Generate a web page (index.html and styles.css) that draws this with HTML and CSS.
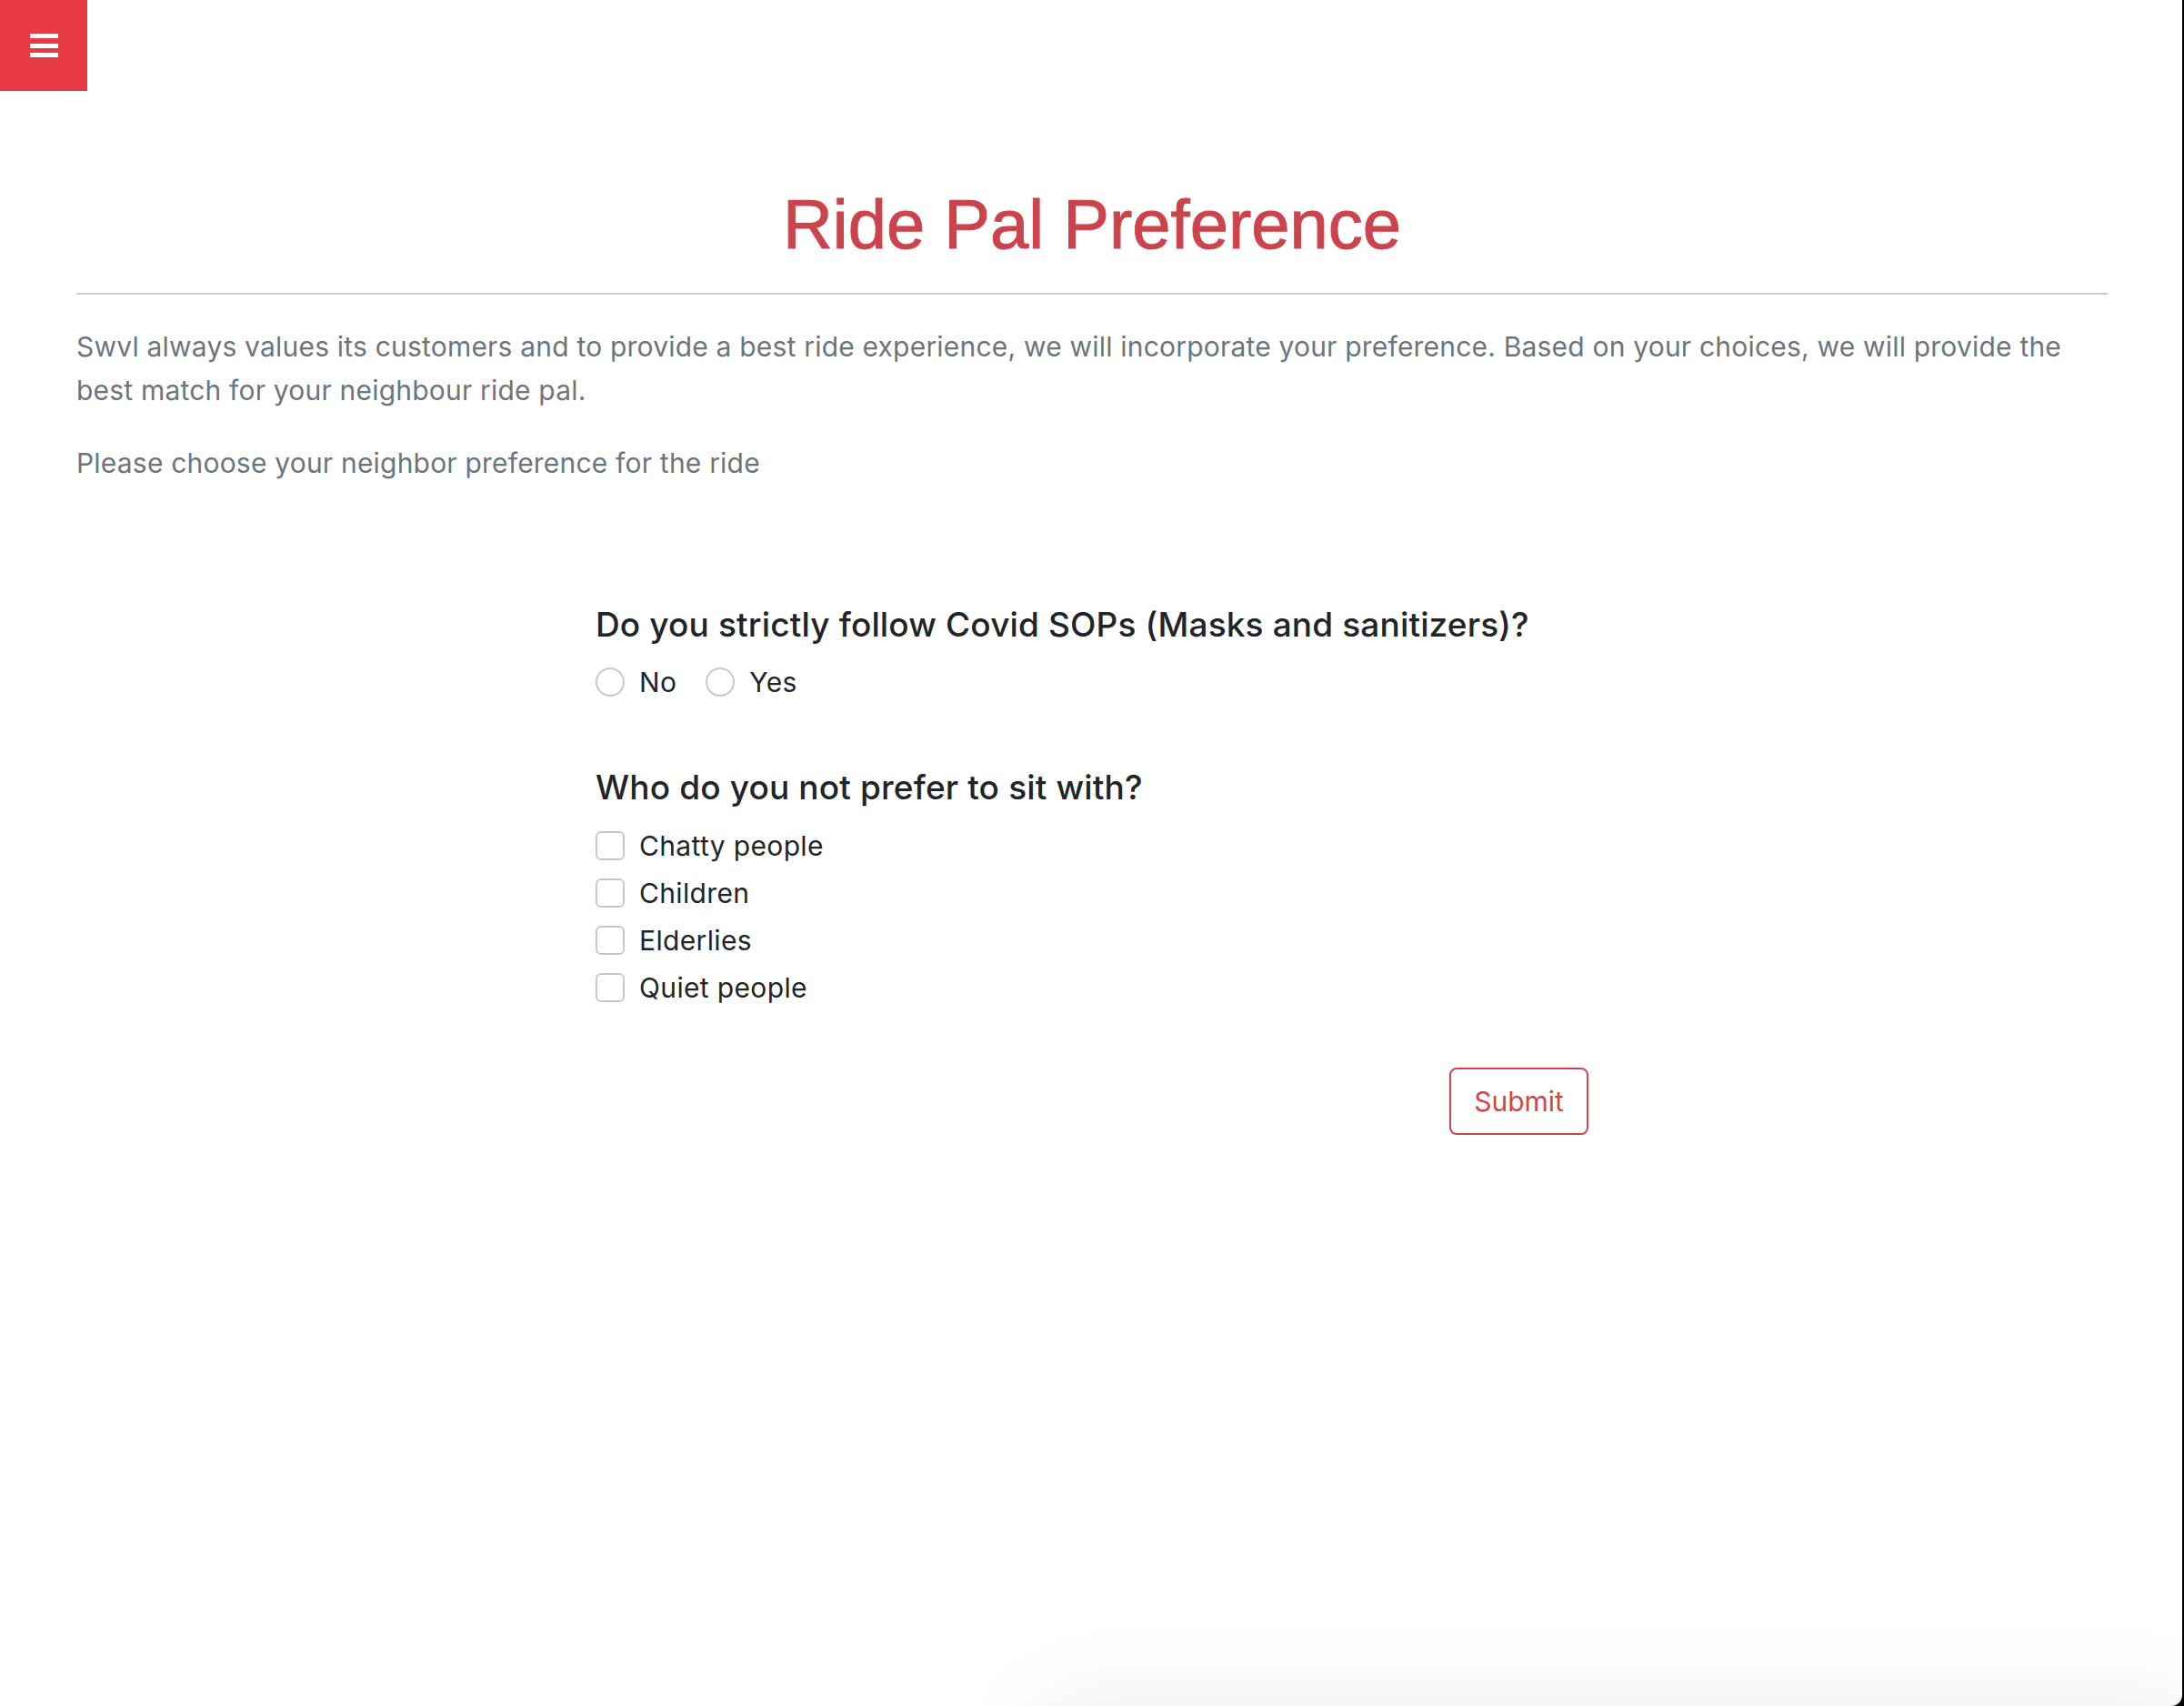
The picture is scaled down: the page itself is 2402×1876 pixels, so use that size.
FILE: index.html
```html
<!DOCTYPE html>
<html lang="en">
<head>
<meta charset="utf-8">
<title>Ride Pal Preference</title>
<link rel="stylesheet" href="styles.css">
</head>
<body>
<button class="menu-btn" type="button" aria-label="Menu">
  <span class="bar"></span><span class="bar"></span><span class="bar"></span>
</button>

<main class="container">
  <h1 class="title">Ride Pal Preference</h1>
  <hr class="divider">
  <p class="lead">Swvl always values its customers and to provide a best ride experience, we will incorporate your preference. Based on your choices, we will provide the best match for your neighbour ride pal.</p>
  <p class="lead">Please choose your neighbor preference for the ride</p>

  <form class="pref-form">
    <section class="question">
      <h2 class="q-title">Do you strictly follow Covid SOPs (Masks and sanitizers)?</h2>
      <div class="inline-options">
        <label class="option"><span class="radio"></span>No</label>
        <label class="option"><span class="radio"></span>Yes</label>
      </div>
    </section>

    <section class="question">
      <h2 class="q-title">Who do you not prefer to sit with?</h2>
      <div class="stack-options">
        <label class="option"><span class="check"></span>Chatty people</label>
        <label class="option"><span class="check"></span>Children</label>
        <label class="option"><span class="check"></span>Elderlies</label>
        <label class="option"><span class="check"></span>Quiet people</label>
      </div>
    </section>

    <div class="actions">
      <button class="submit-btn" type="button">Submit</button>
    </div>
  </form>
</main>

<div class="bottom-sheet"></div>
<div class="window-frame"></div>
</body>
</html>
```

FILE: styles.css
```css
html, body {
  margin: 0;
  padding: 0;
  background: #fff;
}

body {
  font-family: Inter, "Noto Sans", "Liberation Sans", sans-serif;
  color: #212529;
}

.menu-btn {
  position: fixed;
  top: 0;
  left: 0;
  width: 96px;
  height: 100px;
  border: none;
  margin: 0;
  padding: 0;
  background: #e83a45;
  display: flex;
  flex-direction: column;
  align-items: center;
  justify-content: center;
  gap: 5.5px;
  z-index: 5;
}

.menu-btn .bar {
  display: block;
  width: 31px;
  height: 5px;
  background: #fff;
}

.container {
  padding: 199px 84px 0;
}

.title {
  margin: 0;
  text-align: center;
  font-family: "Liberation Sans", Arial, sans-serif;
  font-weight: 400;
  font-size: 76px;
  line-height: 96px;
  color: #cc444b;
  -webkit-text-stroke: 1px #cc444b;
}

.divider {
  margin: 27px 0 0;
  border: none;
  border-top: 2px solid #cbcbcb;
  height: 0;
}

.lead {
  margin: 0 0 32px;
  font-size: 30px;
  line-height: 48px;
  letter-spacing: 0.2px;
  color: #6c757d;
}

.divider + .lead {
  margin-top: 33px;
}

.pref-form {
  width: 1092px;
  margin: 132px auto 0;
}

.question + .question {
  margin-top: 68px;
}

.q-title {
  margin: 0 0 16px;
  font-size: 37px;
  line-height: 43px;
  font-weight: 500;
  letter-spacing: 0.15px;
  color: #212529;
}

.inline-options {
  display: flex;
  gap: 32px;
}

.stack-options {
  display: flex;
  flex-direction: column;
}

.option {
  display: flex;
  align-items: center;
  height: 52px;
  font-size: 30px;
  letter-spacing: 0.35px;
  color: #212529;
}

.stack-options .option:first-child {
  margin-top: 1px;
}

.radio {
  width: 28px;
  height: 28px;
  border: 2px solid #c8c8c8;
  border-radius: 50%;
  margin-right: 16px;
  flex: none;
}

.check {
  width: 28px;
  height: 28px;
  border: 2px solid #c8c8c8;
  border-radius: 6px;
  margin-right: 16px;
  flex: none;
}

.actions {
  display: flex;
  justify-content: flex-end;
  margin-top: 62px;
}

.submit-btn {
  width: 153px;
  height: 74px;
  border: 2px solid #d0454c;
  border-radius: 8px;
  background: #fff;
  color: #d0454c;
  font-family: Inter, "Noto Sans", sans-serif;
  font-size: 30px;
  padding: 0;
}

.bottom-sheet {
  position: fixed;
  left: 1160px;
  right: 0;
  top: 1900px;
  height: 300px;
  background: #fff;
  border-radius: 30px;
  box-shadow: 0 0 110px 20px rgba(0, 0, 0, 0.09);
  pointer-events: none;
}

.window-frame {
  position: fixed;
  top: 0;
  left: 0;
  right: 2px;
  bottom: 0;
  border-bottom-right-radius: 12px;
  box-shadow: 0 0 0 30px #000;
  pointer-events: none;
  z-index: 10;
}
```
